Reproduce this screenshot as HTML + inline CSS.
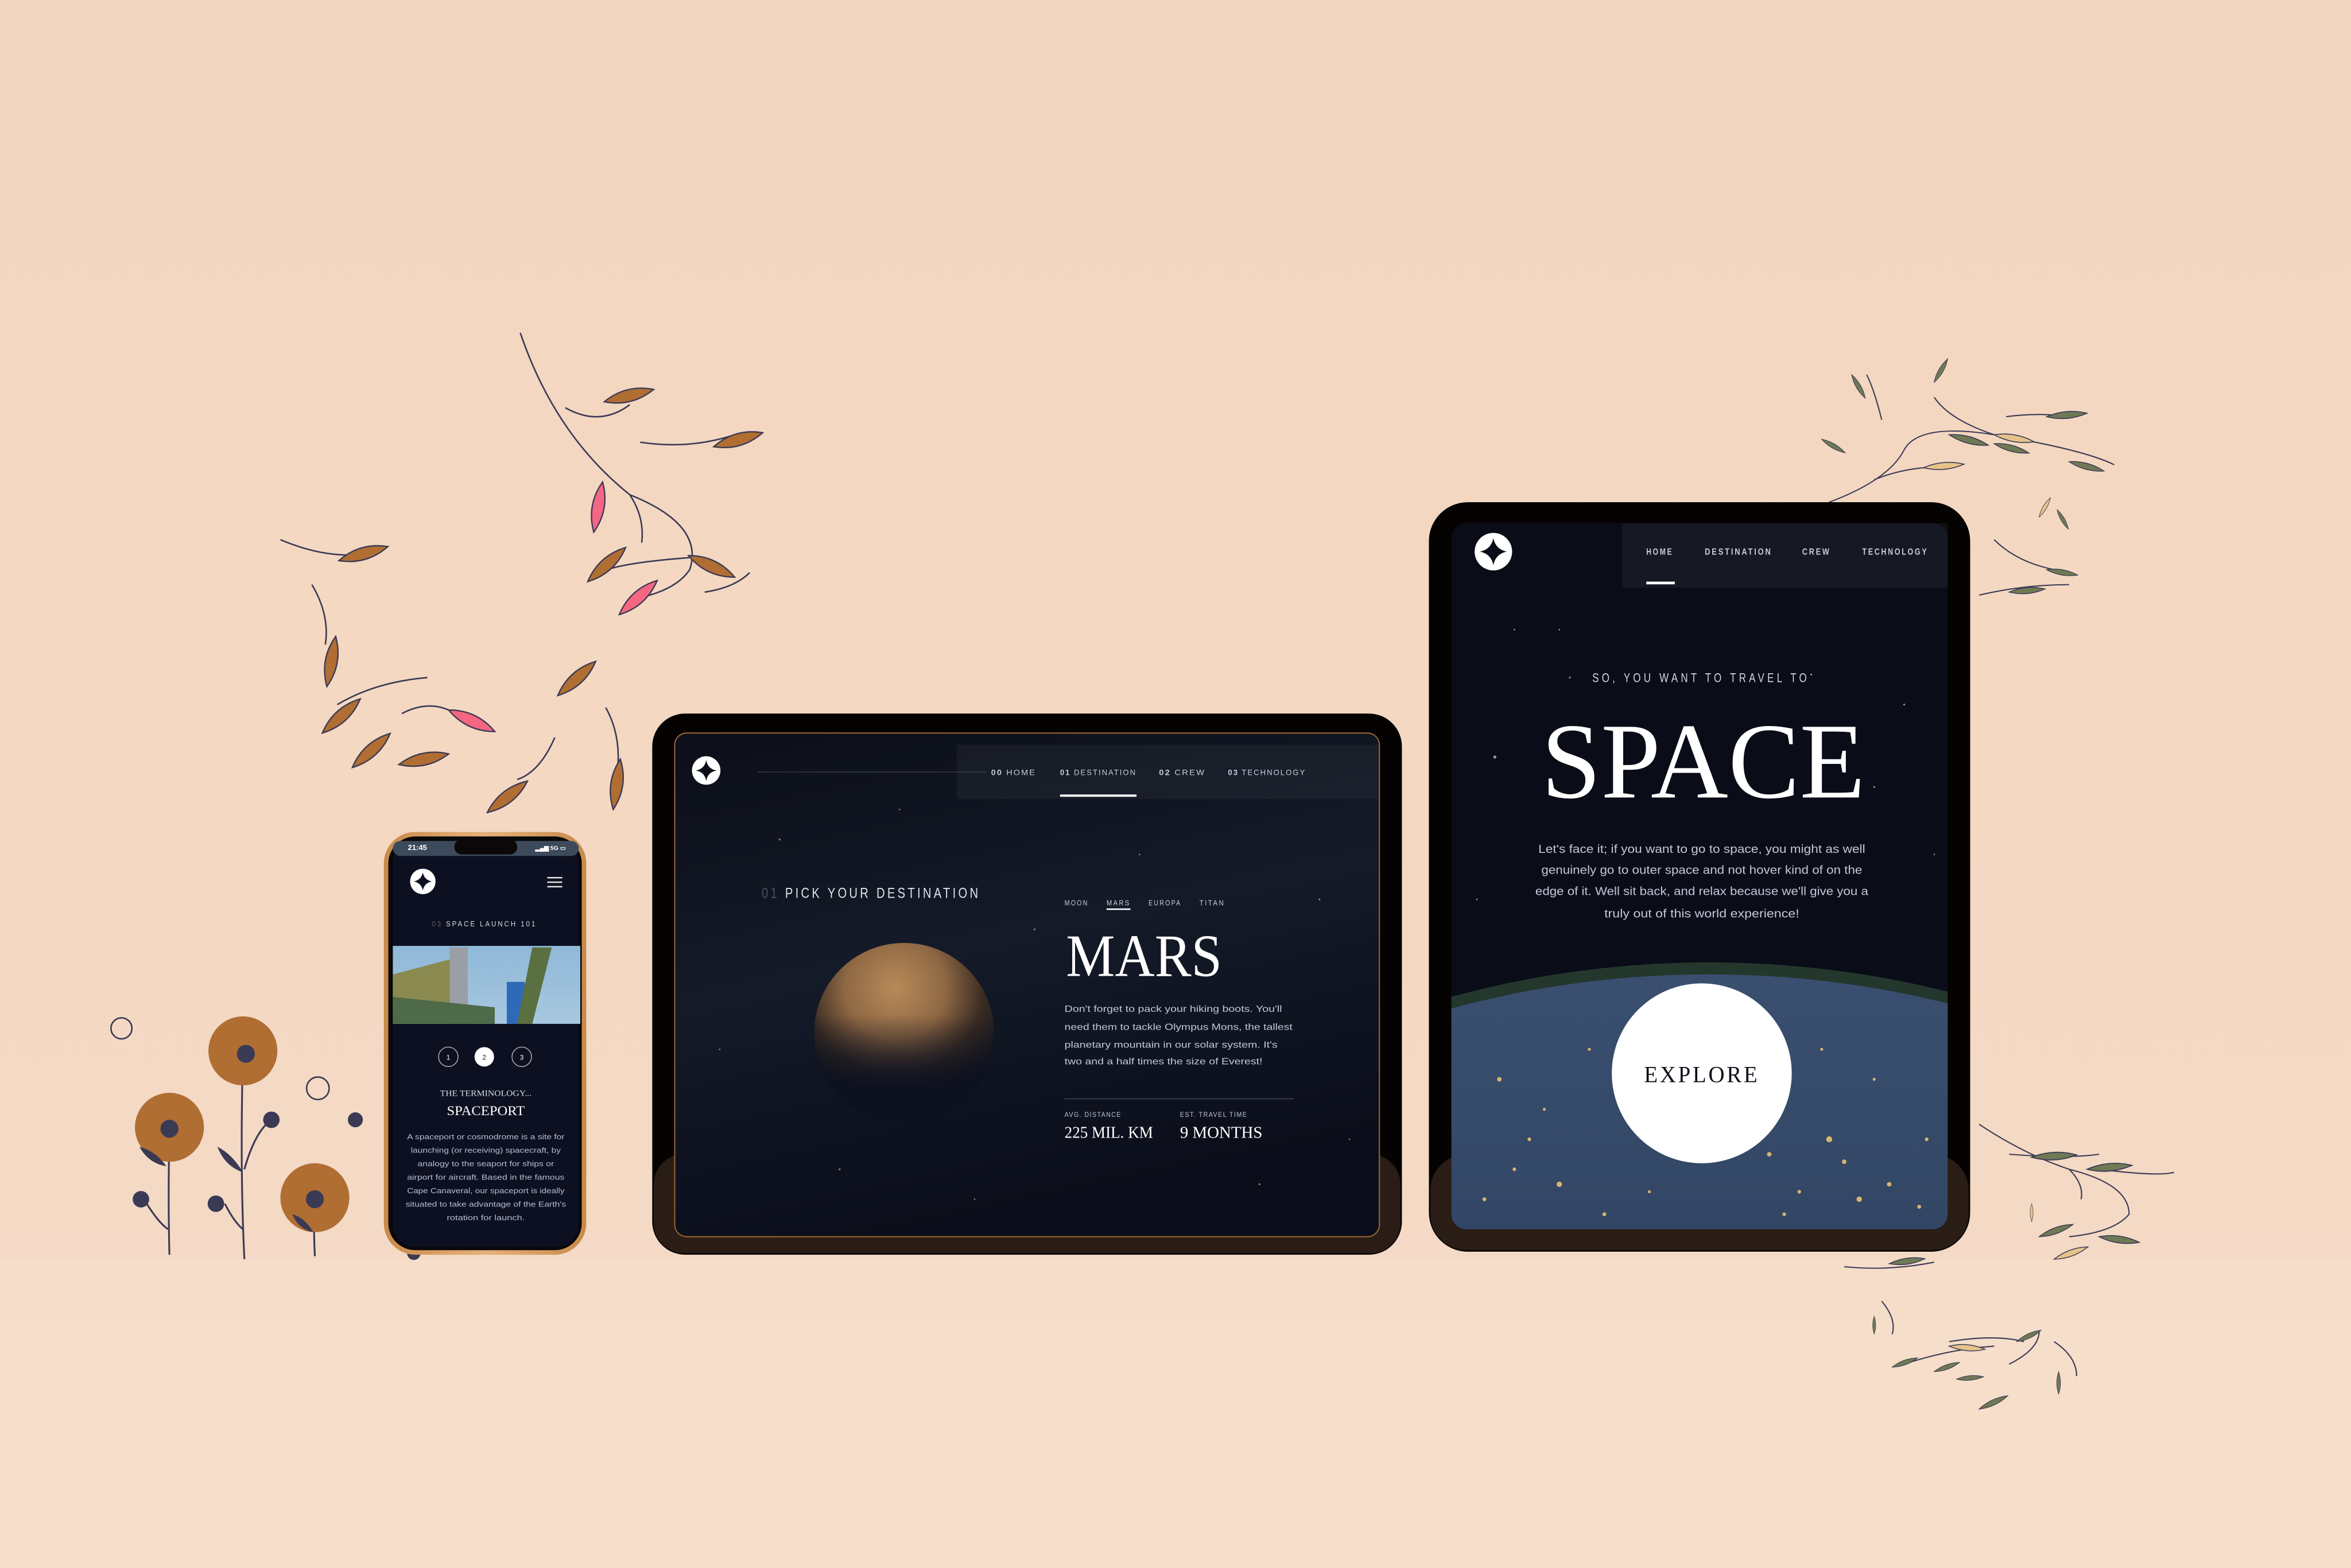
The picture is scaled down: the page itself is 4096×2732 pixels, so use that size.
<!DOCTYPE html>
<html><head><meta charset="utf-8"><style>
html,body{margin:0;padding:0;width:4096px;height:2732px;overflow:hidden;background:#f4d8c2}
svg{display:block;position:absolute;left:0;top:0}
.c{font-family:"Liberation Sans Narrow","Liberation Sans",sans-serif}
.s{font-family:"Liberation Serif",serif}
.n{font-family:"Liberation Sans",sans-serif}
</style></head><body>
<svg width="4096" height="2732" viewBox="0 0 1568 1046" preserveAspectRatio="none" xmlns="http://www.w3.org/2000/svg">
<defs>
<linearGradient id="bg" x1="0" y1="0" x2="0" y2="1"><stop offset="0" stop-color="#f3d6bf"/><stop offset="0.75" stop-color="#f4d9c4"/><stop offset="1" stop-color="#f7e0cd"/></linearGradient>
<linearGradient id="scr" x1="0" y1="0" x2="0.3" y2="1"><stop offset="0" stop-color="#0c0f19"/><stop offset="0.5" stop-color="#141a28"/><stop offset="1" stop-color="#0b0e1a"/></linearGradient>
<radialGradient id="mars" cx="0.45" cy="0.25" r="0.7"><stop offset="0" stop-color="#b98a58"/><stop offset="0.4" stop-color="#8e6844"/><stop offset="0.7" stop-color="#3a2c22"/><stop offset="1" stop-color="#0e1220"/></radialGradient>
<linearGradient id="marsfade" x1="0" y1="0" x2="0" y2="1"><stop offset="0.4" stop-color="#0d1120" stop-opacity="0"/><stop offset="0.8" stop-color="#0d1120" stop-opacity="1"/></linearGradient>
<linearGradient id="earth" x1="0" y1="0" x2="0" y2="1"><stop offset="0" stop-color="#3a4f70"/><stop offset="0.5" stop-color="#283955"/><stop offset="1" stop-color="#1a2740"/></linearGradient>
<linearGradient id="sky" x1="0" y1="0" x2="0" y2="1"><stop offset="0" stop-color="#8fb8d8"/><stop offset="1" stop-color="#a8c8e0"/></linearGradient>
<linearGradient id="phone" x1="0" y1="0" x2="1" y2="0"><stop offset="0" stop-color="#c88a4a"/><stop offset="0.5" stop-color="#e6b07a"/><stop offset="1" stop-color="#c88a4a"/></linearGradient>
<path id="lf" d="M0 0 Q17 -8 34 0 Q17 8 0 0Z"/>
<path id="lg" d="M0 0 Q15 -5 30 0 Q15 5 0 0Z"/>
</defs>
<rect width="1568" height="1046" fill="url(#bg)"/>
<rect y="840" width="1568" height="206" fill="#f6dfcc" opacity="0.5"/>

<g fill="none" stroke="#3b3a55" stroke-width="1">
<path d="M347 222 Q370 290 420 330 Q470 350 460 380 Q450 395 420 400"/>
<path d="M377 272 Q400 285 420 270"/>
<path d="M427 295 Q460 300 490 290"/>
<path d="M420 330 Q430 345 428 362"/>
<path d="M460 372 Q420 375 405 380"/>
<path d="M470 395 Q490 392 500 382"/>
<path d="M187 360 Q215 372 240 370"/>
<path d="M208 390 Q220 410 217 430"/>
<path d="M225 470 Q250 455 285 452"/>
<path d="M268 476 Q285 467 300 474"/>
<path d="M370 492 Q360 515 345 520"/>
<path d="M404 472 Q414 490 412 512"/>
</g>
<g stroke="#3b3a55" stroke-width="0.9">
<use href="#lf" fill="#b06e33" transform="translate(403,268) rotate(-14)"/>
<use href="#lf" fill="#b06e33" transform="translate(476,298) rotate(-16)"/>
<use href="#lf" fill="#f56683" transform="translate(396,355) rotate(-80)"/>
<use href="#lf" fill="#b06e33" transform="translate(392,388) rotate(-42)"/>
<use href="#lf" fill="#f56683" transform="translate(413,410) rotate(-42)"/>
<use href="#lf" fill="#b06e33" transform="translate(490,385) rotate(-155)"/>
<use href="#lf" fill="#b06e33" transform="translate(226,374) rotate(-16)"/>
<use href="#lf" fill="#b06e33" transform="translate(218,458) rotate(-80)"/>
<use href="#lf" fill="#b06e33" transform="translate(215,489) rotate(-42)"/>
<use href="#lf" fill="#b06e33" transform="translate(235,512) rotate(-42)"/>
<use href="#lf" fill="#b06e33" transform="translate(266,510) rotate(-12)"/>
<use href="#lf" fill="#f56683" transform="translate(330,488) rotate(-155)"/>
<use href="#lf" fill="#b06e33" transform="translate(372,464) rotate(-42) scale(-1,1) rotate(180)"/>
<use href="#lf" fill="#b06e33" transform="translate(325,542) rotate(-38)"/>
<use href="#lf" fill="#b06e33" transform="translate(409,540) rotate(-82)"/>
</g>

<g fill="none" stroke="#3b3a55" stroke-width="0.8">
<path d="M1220 335 Q1260 320 1270 300 Q1280 282 1330 290 Q1360 295 1380 300"/>
<path d="M1250 320 Q1275 310 1300 312"/>
<path d="M1330 290 Q1300 280 1290 265"/>
<path d="M1255 280 Q1250 260 1245 250"/>
<path d="M1320 397 Q1350 390 1380 390"/>
<path d="M1330 360 Q1345 375 1370 380"/>
<path d="M1338 278 Q1360 275 1380 278"/>
<path d="M1380 300 Q1400 305 1410 310"/>
<path d="M1320 750 Q1350 770 1380 780 Q1420 790 1420 810 Q1410 822 1380 825"/>
<path d="M1340 770 Q1380 773 1400 770"/>
<path d="M1400 780 Q1440 785 1450 782"/>
<path d="M1380 780 Q1390 790 1388 800"/>
<path d="M1230 845 Q1260 848 1290 842"/>
<path d="M1255 868 Q1265 880 1262 890"/>
<path d="M1270 910 Q1300 900 1330 898"/>
<path d="M1300 895 Q1330 890 1350 895"/>
<path d="M1340 910 Q1360 900 1360 888"/>
<path d="M1370 895 Q1385 905 1385 918"/>
</g>
<g stroke="#3b3a55" stroke-width="0.7">
<use href="#lg" fill="#6f7a55" transform="translate(1235,250) rotate(60) scale(0.6)"/>
<use href="#lg" fill="#6f7a55" transform="translate(1215,293) rotate(30) scale(0.6)"/>
<use href="#lg" fill="#e6c38a" transform="translate(1283,312) rotate(-5) scale(0.9)"/>
<use href="#lg" fill="#6f7a55" transform="translate(1300,290) rotate(15) scale(0.9)"/>
<use href="#lg" fill="#e6c38a" transform="translate(1330,290) rotate(10) scale(0.9)"/>
<use href="#lg" fill="#6f7a55" transform="translate(1290,255) rotate(-60) scale(0.6)"/>
<use href="#lg" fill="#6f7a55" transform="translate(1330,296) rotate(15) scale(0.8)"/>
<use href="#lg" fill="#6f7a55" transform="translate(1365,278) rotate(-5) scale(0.9)"/>
<use href="#lg" fill="#6f7a55" transform="translate(1380,308) rotate(15) scale(0.8)"/>
<use href="#lg" fill="#e6c38a" transform="translate(1360,345) rotate(-60) scale(0.5)"/>
<use href="#lg" fill="#6f7a55" transform="translate(1372,340) rotate(60) scale(0.5)"/>
<use href="#lg" fill="#6f7a55" transform="translate(1365,380) rotate(10) scale(0.7)"/>
<use href="#lg" fill="#6f7a55" transform="translate(1340,395) rotate(-5) scale(0.8)"/>
<use href="#lg" fill="#6f7a55" transform="translate(1300,375) rotate(60) scale(0.6)"/>
<use href="#lg" fill="#6f7a55" transform="translate(1355,772) rotate(-3) scale(1)"/>
<use href="#lg" fill="#6f7a55" transform="translate(1392,780) rotate(-5) scale(1)"/>
<use href="#lg" fill="#e6c38a" transform="translate(1355,815) rotate(-90) scale(0.4)"/>
<use href="#lg" fill="#6f7a55" transform="translate(1360,825) rotate(-20) scale(0.8)"/>
<use href="#lg" fill="#e6c38a" transform="translate(1370,840) rotate(-20) scale(0.8)"/>
<use href="#lg" fill="#6f7a55" transform="translate(1400,825) rotate(8) scale(0.9)"/>
<use href="#lg" fill="#6f7a55" transform="translate(1260,843) rotate(-8) scale(0.8)"/>
<use href="#lg" fill="#6f7a55" transform="translate(1250,890) rotate(-90) scale(0.4)"/>
<use href="#lg" fill="#6f7a55" transform="translate(1262,912) rotate(-20) scale(0.6)"/>
<use href="#lg" fill="#6f7a55" transform="translate(1290,915) rotate(-20) scale(0.6)"/>
<use href="#lg" fill="#e6c38a" transform="translate(1300,898) rotate(5) scale(0.8)"/>
<use href="#lg" fill="#6f7a55" transform="translate(1305,920) rotate(-5) scale(0.6)"/>
<use href="#lg" fill="#6f7a55" transform="translate(1320,940) rotate(-25) scale(0.7)"/>
<use href="#lg" fill="#6f7a55" transform="translate(1345,895) rotate(-25) scale(0.6)"/>
<use href="#lg" fill="#6f7a55" transform="translate(1373,915) rotate(90) scale(0.5)"/>
</g>

<g stroke="#3b3a55" stroke-width="1.2" fill="none">
<path d="M162 705 Q160 780 163 840"/>
<path d="M113 756 Q112 800 113 837"/>
<path d="M210 802 Q209 820 210 838"/>
<path d="M163 780 Q170 755 181 747"/>
<path d="M150 803 Q156 815 162 820"/>
<path d="M96 800 Q105 815 112 820"/>
<circle cx="81" cy="686" r="7" stroke-width="1"/>
<circle cx="212" cy="726" r="7.5" stroke-width="1"/>
</g>
<circle cx="162" cy="701" r="23" fill="#b06e33"/>
<circle cx="113" cy="752" r="23" fill="#b06e33"/>
<circle cx="210" cy="799" r="23" fill="#b06e33"/>
<g fill="#3b3a55">
<circle cx="164" cy="703" r="6"/><circle cx="113" cy="753" r="6"/><circle cx="210" cy="800" r="6"/>
<circle cx="181" cy="747" r="5.5"/><circle cx="144" cy="803" r="5.5"/><circle cx="94" cy="800" r="5.5"/><circle cx="237" cy="747" r="5"/><circle cx="276" cy="836" r="4.5"/>
<path d="M145 765 Q155 770 162 782 Q150 778 145 765Z"/><path d="M93 765 Q104 768 111 778 Q99 776 93 765Z"/><path d="M195 810 Q203 812 209 822 Q199 820 195 810Z"/>
</g>

<!-- middle tablet -->
<rect x="435" y="476" width="500" height="361" rx="22" fill="#050302"/>
<rect x="436" y="770" width="498" height="66" rx="20" fill="#2a1d15"/>
<rect x="450" y="489" width="470" height="336" rx="8" fill="url(#scr)" stroke="#9a6232" stroke-width="0.8"/>
<g fill="#fff" opacity="0.5">
<circle cx="520" cy="560" r="0.6"/><circle cx="600" cy="540" r="0.5"/><circle cx="690" cy="620" r="0.6"/><circle cx="480" cy="700" r="0.5"/><circle cx="560" cy="780" r="0.6"/><circle cx="880" cy="600" r="0.6"/><circle cx="900" cy="760" r="0.5"/><circle cx="650" cy="800" r="0.5"/><circle cx="840" cy="790" r="0.6"/><circle cx="760" cy="570" r="0.5"/>
</g>
<rect x="638" y="497" width="282" height="36" fill="#fff" opacity="0.04"/>
<circle cx="471" cy="514" r="9.5" fill="#fff"/>
<path d="M471 507 Q472 513 478 514 Q472 515 471 521 Q470 515 464 514 Q470 513 471 507Z" fill="#0b0d17"/>
<line x1="505" y1="515" x2="658" y2="515" stroke="#fff" stroke-opacity="0.2" stroke-width="0.5"/>
<g class="c" font-size="5.3" fill="#c8cede" letter-spacing="0.8">
<text x="661" y="517" textLength="30" lengthAdjust="spacingAndGlyphs"><tspan font-weight="bold">00</tspan>  HOME</text>
<text x="707" y="517" textLength="51" lengthAdjust="spacingAndGlyphs"><tspan font-weight="bold">01</tspan>  DESTINATION</text>
<text x="773" y="517" textLength="31" lengthAdjust="spacingAndGlyphs"><tspan font-weight="bold">02</tspan>  CREW</text>
<text x="819" y="517" textLength="52" lengthAdjust="spacingAndGlyphs"><tspan font-weight="bold">03</tspan>  TECHNOLOGY</text>
</g>
<rect x="707" y="530" width="51" height="1.5" fill="#fff"/>
<text class="c" x="508" y="599" font-size="9.5" fill="#dfe3ee" letter-spacing="2" textLength="146" lengthAdjust="spacingAndGlyphs"><tspan fill="#4b5060">01</tspan>  PICK YOUR DESTINATION</text>
<circle cx="603" cy="689" r="60" fill="url(#mars)"/>
<circle cx="603" cy="689" r="61" fill="url(#marsfade)"/>
<g class="c" font-size="5" fill="#c8d0e8" letter-spacing="1">
<text x="710" y="604" textLength="16" lengthAdjust="spacingAndGlyphs">MOON</text><text x="738" y="604" textLength="16" lengthAdjust="spacingAndGlyphs">MARS</text><text x="766" y="604" textLength="22" lengthAdjust="spacingAndGlyphs">EUROPA</text><text x="800" y="604" textLength="17" lengthAdjust="spacingAndGlyphs">TITAN</text>
</g>
<rect x="738" y="606" width="16" height="1" fill="#fff"/>
<text class="s" x="711" y="651" font-size="40" fill="#fff" textLength="104" lengthAdjust="spacingAndGlyphs">MARS</text>
<g class="n" font-size="6" fill="#c3c8d8">
<text x="710" y="675" textLength="145" lengthAdjust="spacingAndGlyphs">Don't forget to pack your hiking boots. You'll</text>
<text x="710" y="687" textLength="152" lengthAdjust="spacingAndGlyphs">need them to tackle Olympus Mons, the tallest</text>
<text x="710" y="699" textLength="142" lengthAdjust="spacingAndGlyphs">planetary mountain in our solar system. It's</text>
<text x="710" y="710" textLength="132" lengthAdjust="spacingAndGlyphs">two and a half times the size of Everest!</text>
</g>
<line x1="710" y1="733" x2="863" y2="733" stroke="#3a4050" stroke-width="0.7"/>
<g class="c" font-size="4.5" fill="#c3c8d8" letter-spacing="0.6"><text x="710" y="745" textLength="38" lengthAdjust="spacingAndGlyphs">AVG. DISTANCE</text><text x="787" y="745" textLength="45" lengthAdjust="spacingAndGlyphs">EST. TRAVEL TIME</text></g>
<g class="s" font-size="11" fill="#fff"><text x="710" y="759" textLength="59" lengthAdjust="spacingAndGlyphs">225 MIL. KM</text><text x="787" y="759" textLength="55" lengthAdjust="spacingAndGlyphs">9 MONTHS</text></g>

<!-- right tablet -->
<rect x="953" y="335" width="361" height="500" rx="26" fill="#050302"/>
<rect x="954" y="770" width="359" height="64" rx="24" fill="#2a1d15"/>
<rect x="968" y="349" width="331" height="471" rx="10" fill="#0a0c18"/>
<rect x="1082" y="349" width="217" height="43" fill="#fff" opacity="0.05"/>
<g fill="#fff" opacity="0.6">
<circle cx="997" cy="505" r="1"/><circle cx="1047" cy="452" r="0.6"/><circle cx="1208" cy="450" r="0.6"/><circle cx="1270" cy="470" r="0.6"/><circle cx="1040" cy="420" r="0.5"/><circle cx="1250" cy="525" r="0.6"/><circle cx="1290" cy="570" r="0.5"/><circle cx="985" cy="600" r="0.5"/><circle cx="1010" cy="420" r="0.5"/>
</g>
<circle cx="996" cy="368" r="12.5" fill="#fff"/>
<path d="M996 359 Q997.5 366.5 1005 368 Q997.5 369.5 996 377 Q994.5 369.5 987 368 Q994.5 366.5 996 359Z" fill="#0a0c18"/>
<g class="c" font-size="6" fill="#c8cede" letter-spacing="1.3" font-weight="bold">
<text x="1098" y="370" textLength="18" lengthAdjust="spacingAndGlyphs">HOME</text><text x="1137" y="370" textLength="45" lengthAdjust="spacingAndGlyphs">DESTINATION</text><text x="1202" y="370" textLength="19" lengthAdjust="spacingAndGlyphs">CREW</text><text x="1242" y="370" textLength="44" lengthAdjust="spacingAndGlyphs">TECHNOLOGY</text>
</g>
<rect x="1098" y="388" width="19" height="1.8" fill="#fff"/>
<text class="c" x="1062" y="455" font-size="8.5" fill="#d0d6e6" letter-spacing="2.6" textLength="145" lengthAdjust="spacingAndGlyphs">SO, YOU WANT TO TRAVEL TO</text>
<text class="s" x="1028" y="532" font-size="72" fill="#fff" textLength="216" lengthAdjust="spacingAndGlyphs">SPACE</text>
<g class="n" font-size="7.8" fill="#c3c8d8" text-anchor="middle">
<text x="1135" y="569" textLength="218" lengthAdjust="spacingAndGlyphs">Let's face it; if you want to go to space, you might as well</text>
<text x="1135" y="583" textLength="214" lengthAdjust="spacingAndGlyphs">genuinely go to outer space and not hover kind of on the</text>
<text x="1135" y="597" textLength="222" lengthAdjust="spacingAndGlyphs">edge of it. Well sit back, and relax because we'll give you a</text>
<text x="1135" y="612" textLength="130" lengthAdjust="spacingAndGlyphs">truly out of this world experience!</text>
</g>
<clipPath id="rc"><rect x="968" y="349" width="331" height="471" rx="10"/></clipPath>
<g clip-path="url(#rc)">
<ellipse cx="1140" cy="1050" rx="520" ry="408" fill="#2f4a36" opacity="0.7"/>
<ellipse cx="1140" cy="1055" rx="520" ry="405" fill="url(#earth)"/>
<g fill="#f4c870" opacity="0.85">
<circle cx="1000" cy="720" r="1.5"/><circle cx="1020" cy="760" r="1.2"/><circle cx="1040" cy="790" r="1.8"/><circle cx="990" cy="800" r="1.3"/><circle cx="1220" cy="760" r="2"/><circle cx="1230" cy="775" r="1.5"/><circle cx="1260" cy="790" r="1.5"/><circle cx="1280" cy="805" r="1.3"/><circle cx="1200" cy="795" r="1.2"/><circle cx="1215" cy="700" r="1"/><circle cx="1250" cy="720" r="1"/><circle cx="1070" cy="810" r="1.3"/><circle cx="1190" cy="810" r="1.2"/><circle cx="1100" cy="795" r="1"/><circle cx="1060" cy="700" r="1"/><circle cx="1285" cy="760" r="1.2"/>
<circle cx="1180" cy="770" r="1.5"/><circle cx="1240" cy="800" r="1.8"/><circle cx="1010" cy="780" r="1.2"/><circle cx="1030" cy="740" r="1"/>
</g>
</g>
<circle cx="1135" cy="716" r="60" fill="#fff"/>
<text class="s" x="1135" y="722" text-anchor="middle" font-size="15.5" fill="#0b0d17" letter-spacing="1.5" textLength="77" lengthAdjust="spacingAndGlyphs">EXPLORE</text>

<!-- phone -->
<rect x="256" y="555" width="135" height="282" rx="21" fill="url(#phone)"/>
<rect x="259" y="558" width="129" height="276" rx="18" fill="#0a0808"/>
<rect x="262" y="561" width="124" height="271" rx="15" fill="#0d1020"/>
<rect x="262" y="561" width="124" height="10" rx="5" fill="#3c4a5c"/>
<rect x="303" y="560" width="42" height="10" rx="5" fill="#0a0808"/>
<text class="n" x="272" y="567" font-size="5" font-weight="bold" fill="#fff">21:45</text>
<text class="n" x="357" y="567" font-size="4" font-weight="bold" fill="#fff">▂▄▆ 5G ▭</text>
<circle cx="282" cy="588" r="8.5" fill="#fff"/>
<path d="M282 582 Q283 587 288 588 Q283 589 282 594 Q281 589 276 588 Q281 587 282 582Z" fill="#0d1020"/>
<g fill="#ddd"><rect x="365" y="585" width="10" height="1"/><rect x="365" y="588" width="10" height="1"/><rect x="365" y="591" width="10" height="1"/></g>
<text class="c" x="288" y="618" font-size="5" fill="#d6dcec" letter-spacing="1.2" textLength="70" lengthAdjust="spacingAndGlyphs"><tspan fill="#555a6a">03</tspan>  SPACE LAUNCH 101</text>
<rect x="262" y="631" width="125" height="52" fill="url(#sky)"/>
<path d="M262 650 L300 640 L310 670 L262 670Z" fill="#8a8a50"/>
<rect x="300" y="632" width="12" height="51" fill="#9a9ea6"/>
<rect x="338" y="655" width="12" height="28" fill="#2f6ab8"/>
<path d="M262 665 L330 672 L330 683 L262 683Z" fill="#4e6a48"/>
<path d="M355 632 L368 632 L355 683 L345 683Z" fill="#5a7040"/>
<circle cx="299" cy="705" r="6.5" fill="none" stroke="#aaa" stroke-width="0.6"/>
<circle cx="323" cy="705" r="6.5" fill="#fff"/>
<circle cx="348" cy="705" r="6.5" fill="none" stroke="#aaa" stroke-width="0.6"/>
<g class="n" font-size="4.5" text-anchor="middle"><text x="299" y="707" fill="#fff">1</text><text x="323" y="707" fill="#0d1020">2</text><text x="348" y="707" fill="#fff">3</text></g>
<text class="s" x="324" y="731" text-anchor="middle" font-size="5.5" fill="#d6dcec" textLength="61" lengthAdjust="spacingAndGlyphs">THE TERMINOLOGY...</text>
<text class="s" x="324" y="744" text-anchor="middle" font-size="9" fill="#fff" textLength="52" lengthAdjust="spacingAndGlyphs">SPACEPORT</text>
<g class="n" font-size="5" fill="#b8bed0" text-anchor="middle">
<text x="324" y="760" textLength="105" lengthAdjust="spacingAndGlyphs">A spaceport or cosmodrome is a site for</text>
<text x="324" y="769" textLength="100" lengthAdjust="spacingAndGlyphs">launching (or receiving) spacecraft, by</text>
<text x="324" y="778" textLength="91" lengthAdjust="spacingAndGlyphs">analogy to the seaport for ships or</text>
<text x="324" y="787" textLength="105" lengthAdjust="spacingAndGlyphs">airport for aircraft. Based in the famous</text>
<text x="324" y="796" textLength="105" lengthAdjust="spacingAndGlyphs">Cape Canaveral, our spaceport is ideally</text>
<text x="324" y="805" textLength="107" lengthAdjust="spacingAndGlyphs">situated to take advantage of the Earth's</text>
<text x="324" y="814" textLength="52" lengthAdjust="spacingAndGlyphs">rotation for launch.</text>
</g>
</svg>
</body></html>
